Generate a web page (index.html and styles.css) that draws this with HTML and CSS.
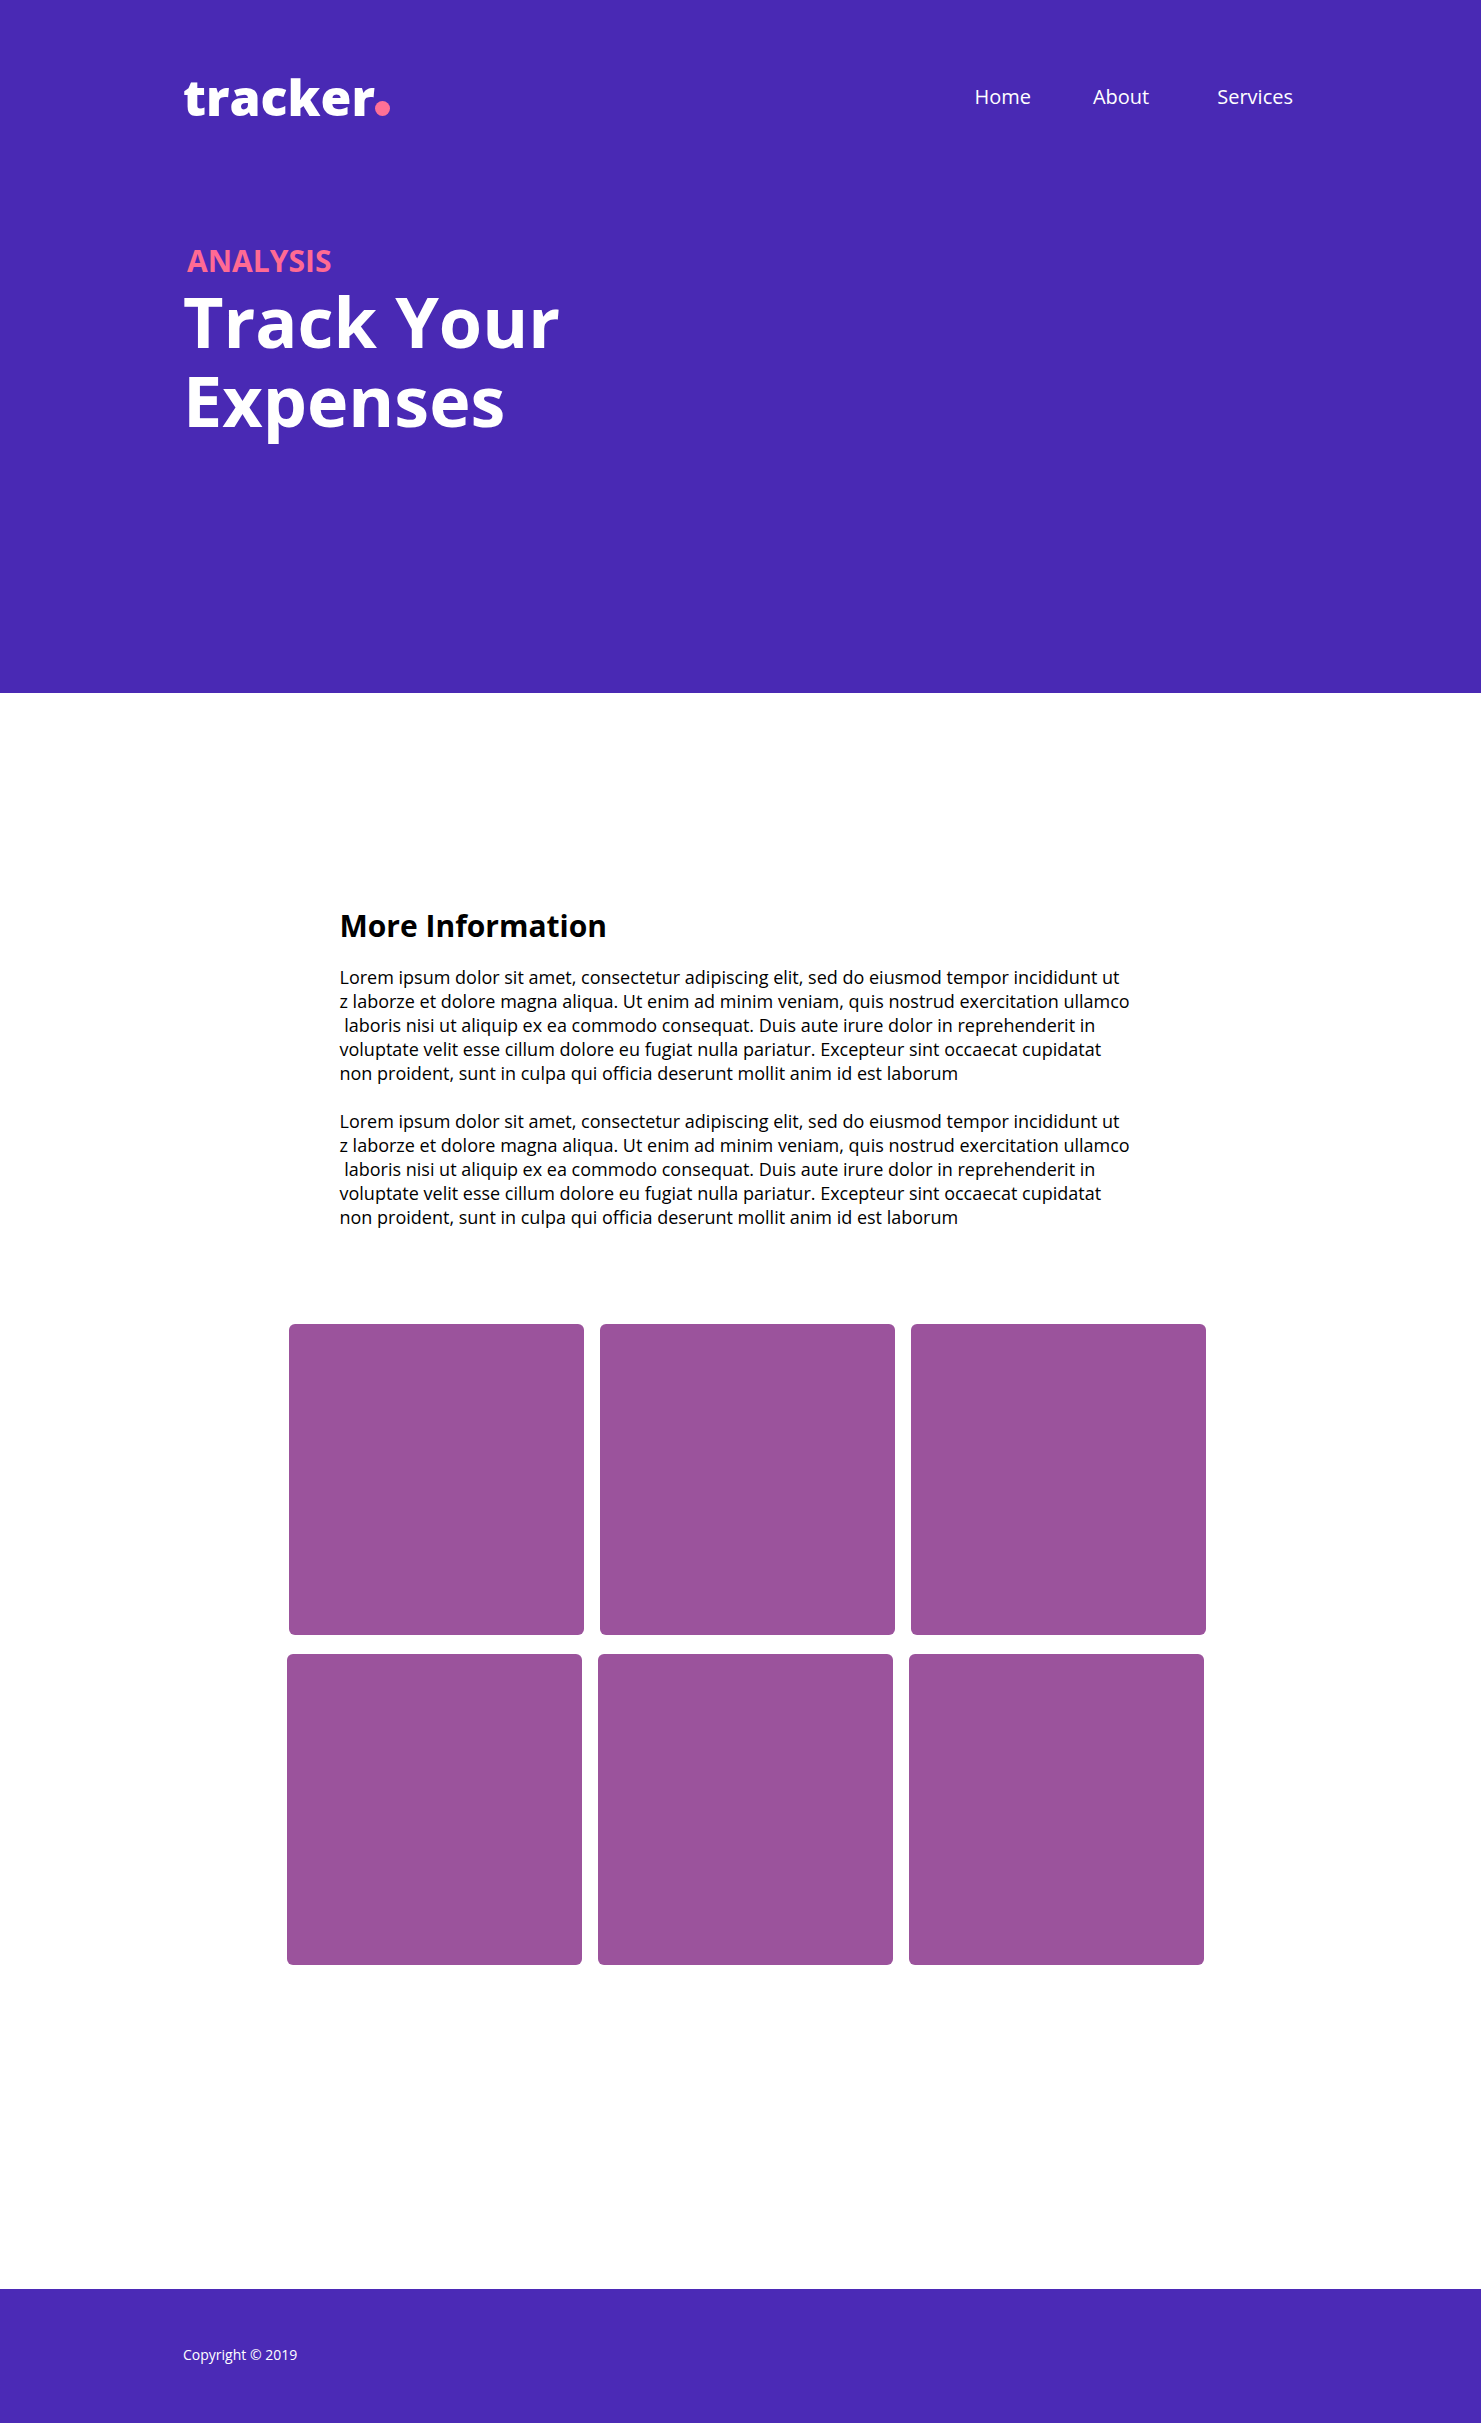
FILE: index.html
```html
<!DOCTYPE html>
<html lang="en">
<head>
<meta charset="utf-8">
<meta name="viewport" content="width=device-width, initial-scale=1">
<title>tracker.</title>
<link rel="stylesheet" href="styles.css">
</head>
<body>
<header class="hero">
  <div class="topbar">
    <a class="logo" href="#">tracker<svg class="logo-dot" viewBox="0 0 15 15" aria-hidden="true"><circle cx="7.5" cy="7.5" r="7.5"/></svg></a>
    <nav class="nav">
      <a href="#">Home</a>
      <a href="#">About</a>
      <a class="nav-last" href="#">Services</a>
    </nav>
  </div>
  <p class="eyebrow">ANALYSIS</p>
  <h1 class="title">Track Your<br>Expenses</h1>
</header>
<main class="main">
  <section class="info">
    <h2 class="info-title">More Information</h2>
    <p class="copy">Lorem ipsum dolor sit amet, consectetur adipiscing elit, sed do eiusmod tempor incididunt ut
z laborze et dolore magna aliqua. Ut enim ad minim veniam, quis nostrud exercitation ullamco
 laboris nisi ut aliquip ex ea commodo consequat. Duis aute irure dolor in reprehenderit in
voluptate velit esse cillum dolore eu fugiat nulla pariatur. Excepteur sint occaecat cupidatat
non proident, sunt in culpa qui officia deserunt mollit anim id est laborum</p>
    <p class="copy">Lorem ipsum dolor sit amet, consectetur adipiscing elit, sed do eiusmod tempor incididunt ut
z laborze et dolore magna aliqua. Ut enim ad minim veniam, quis nostrud exercitation ullamco
 laboris nisi ut aliquip ex ea commodo consequat. Duis aute irure dolor in reprehenderit in
voluptate velit esse cillum dolore eu fugiat nulla pariatur. Excepteur sint occaecat cupidatat
non proident, sunt in culpa qui officia deserunt mollit anim id est laborum</p>
  </section>
  <section class="gallery">
    <div class="tiles tiles-first">
      <div class="tile"></div><div class="tile"></div><div class="tile"></div>
    </div>
    <div class="tiles">
      <div class="tile"></div><div class="tile"></div><div class="tile"></div>
    </div>
  </section>
</main>
<footer class="footer">
  <p class="copyright">Copyright © 2019</p>
</footer>
</body>
</html>
```
FILE: styles.css
```css
* {
  box-sizing: border-box;
}

body {
  margin: 0;
  background: #fff;
  color: #000;
  font-family: "Open Sans", sans-serif;
}

h1, h2, p {
  margin: 0;
}

.hero {
  padding: 63px 183px 253px;
  background: #4929b4;
  color: #fff;
}

.topbar {
  display: flex;
  justify-content: space-between;
  align-items: center;
}

.logo {
  color: #fff;
  font-size: 50px;
  font-weight: 800;
  line-height: 68px;
  text-decoration: none;
}

.logo-dot {
  width: 15px;
  height: 15px;
  fill: #ff7096;
}

.nav {
  display: flex;
  gap: 62px;
  padding-right: 5px;
}

.nav a {
  color: #fff;
  font-size: 20px;
  line-height: 28px;
  text-decoration: none;
}

.nav .nav-last {
  margin-left: 6px;
}

.eyebrow {
  margin-top: 109px;
  padding-left: 4px;
  color: #ff6a93;
  font-size: 30px;
  font-weight: 700;
  line-height: 42px;
}

.title {
  font-size: 70px;
  font-weight: 700;
  line-height: 79px;
}

.info {
  max-width: 802px;
  margin: 0 auto;
  padding-top: 212px;
}

.info-title {
  font-size: 30px;
  font-weight: 700;
  line-height: 42px;
}

.copy {
  margin-top: 18px;
  font-size: 18px;
  line-height: 24px;
  white-space: pre-wrap;
}

.copy + .copy {
  margin-top: 24px;
}

.gallery {
  display: grid;
  gap: 19px;
  max-width: 931px;
  margin: 0 auto;
  padding: 95px 0 324px 12px;
}

.tiles {
  display: grid;
  grid-template-columns: repeat(3, 1fr);
  gap: 16px;
  margin-right: 2px;
}

.tiles-first {
  margin-right: 0;
  margin-left: 2px;
}

.tile {
  height: 311px;
  border-radius: 6px;
  background: #9b539c;
}

.footer {
  padding: 55px 183px 57px;
  background: #4b2ab6;
  color: #fff;
}

.copyright {
  font-size: 14px;
  line-height: 22px;
}
```
